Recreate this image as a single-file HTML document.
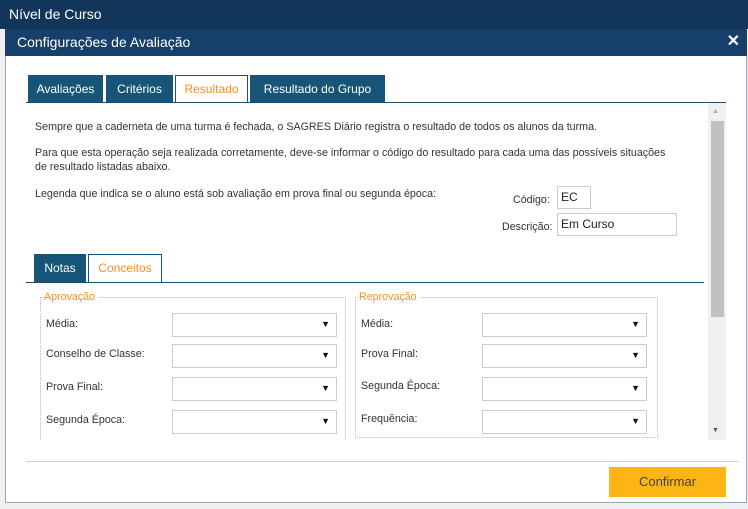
<!DOCTYPE html>
<html><head><meta charset="utf-8"><style>
*{box-sizing:border-box;margin:0;padding:0}
body{width:748px;height:509px;background:#eef0f2;font-family:"Liberation Sans",sans-serif;position:relative;overflow:hidden;font-size:10.7px;color:#333}
.a{position:absolute}
.top{left:0;top:0;width:748px;height:29px;background:#12355a;color:#fff;font-size:14px;padding:6px 9px}
.dlg{left:5px;top:29px;width:742px;height:474px;background:#fff;border:1px solid #9aa5b0}
.dh{left:5px;top:29px;width:742px;height:27px;background:#163f69;color:#fff;font-size:14px;padding:5px 12px}
.tab{top:75px;height:28px;background:#165478;color:#fff;font-size:12px;text-align:center;line-height:28px}
.tab.on{background:#fff;color:#f7901e;border:1px solid #165478;border-bottom:none;height:28px;line-height:26px}
.ln{height:1px;background:#1a4c6e}
.sel{width:165px;height:24px;border:1px solid #ccc;background:#fff}
.sel:after{content:"▼";position:absolute;right:6px;top:5px;font-size:9px;color:#111}
.lbl{font-size:10.7px;color:#333}
.fs{border:1px dotted #bbb;border-bottom:none}
.leg{background:#fff;color:#f7901e;font-size:10.7px;padding-right:3px}
.inp{border:1px solid #ccc;background:#fff;font-size:12px;padding:3px 3px;color:#222}
</style></head><body>
<div class="a top">Nível de Curso</div>
<div class="a dlg"></div>
<div class="a dh">Configurações de Avaliação<span style="position:absolute;right:7px;top:2px;font-size:16px;font-weight:bold">✕</span></div>

<div class="a tab" style="left:28px;width:75px">Avaliações</div>
<div class="a tab" style="left:106px;width:67px">Critérios</div>
<div class="a tab on" style="left:175px;width:73px">Resultado</div>
<div class="a tab" style="left:250px;width:135px">Resultado do Grupo</div>
<div class="a ln" style="left:26px;top:102px;width:700px"></div>

<div class="a" style="left:708px;top:103px;width:18px;height:337px;background:#f0f0f0"></div>
<div class="a" style="left:711px;top:121px;width:13px;height:196px;background:#c1c1c1"></div>
<div class="a" style="left:712px;top:108px;font-size:7px;color:#aaa">▲</div>
<div class="a" style="left:712px;top:427px;font-size:7px;color:#555">▼</div>

<div class="a lbl" style="left:35px;top:121px">Sempre que a caderneta de uma turma é fechada, o SAGRES Diário registra o resultado de todos os alunos da turma.</div>
<div class="a lbl" style="left:35px;top:146px;width:640px;line-height:14px">Para que esta operação seja realizada corretamente, deve-se informar o código do resultado para cada uma das possíveis situações de resultado listadas abaixo.</div>
<div class="a lbl" style="left:35px;top:188px">Legenda que indica se o aluno está sob avaliação em prova final ou segunda época:</div>
<div class="a lbl" style="left:513px;top:194px">Código:</div>
<div class="a inp" style="left:557px;top:186px;width:34px;height:23px">EC</div>
<div class="a lbl" style="left:502px;top:221px">Descrição:</div>
<div class="a inp" style="left:557px;top:213px;width:120px;height:23px">Em Curso</div>

<div class="a tab" style="left:34px;top:254px;width:52px;font-size:12px">Notas</div>
<div class="a tab on" style="left:88px;top:254px;width:74px">Conceitos</div>
<div class="a ln" style="left:26px;top:282px;width:678px"></div>

<div class="a fs" style="left:40px;top:297px;width:306px;height:143px"></div>
<div class="a leg" style="left:44px;top:291px">Aprovação</div>
<div class="a fs" style="left:355px;top:297px;width:303px;height:141px;border-bottom:1px dotted #bbb"></div>
<div class="a leg" style="left:359px;top:291px">Reprovação</div>

<div class="a lbl" style="left:46px;top:318px">Média:</div>
<div class="a lbl" style="left:46px;top:348px">Conselho de Classe:</div>
<div class="a lbl" style="left:46px;top:381px">Prova Final:</div>
<div class="a lbl" style="left:46px;top:414px">Segunda Época:</div>
<div class="a sel" style="left:172px;top:313px"></div>
<div class="a sel" style="left:172px;top:344px"></div>
<div class="a sel" style="left:172px;top:377px"></div>
<div class="a sel" style="left:172px;top:410px"></div>

<div class="a lbl" style="left:361px;top:318px">Média:</div>
<div class="a lbl" style="left:361px;top:348px">Prova Final:</div>
<div class="a lbl" style="left:361px;top:380px">Segunda Época:</div>
<div class="a lbl" style="left:361px;top:413px">Frequência:</div>
<div class="a sel" style="left:482px;top:313px"></div>
<div class="a sel" style="left:482px;top:344px"></div>
<div class="a sel" style="left:482px;top:377px"></div>
<div class="a sel" style="left:482px;top:410px"></div>

<div class="a" style="left:26px;top:461px;width:712px;height:1px;background:#ccc"></div>
<div class="a" style="left:609px;top:467px;width:117px;height:30px;background:#fdb515;color:#444;font-size:13px;text-align:center;line-height:30px">Confirmar</div>
</body></html>
